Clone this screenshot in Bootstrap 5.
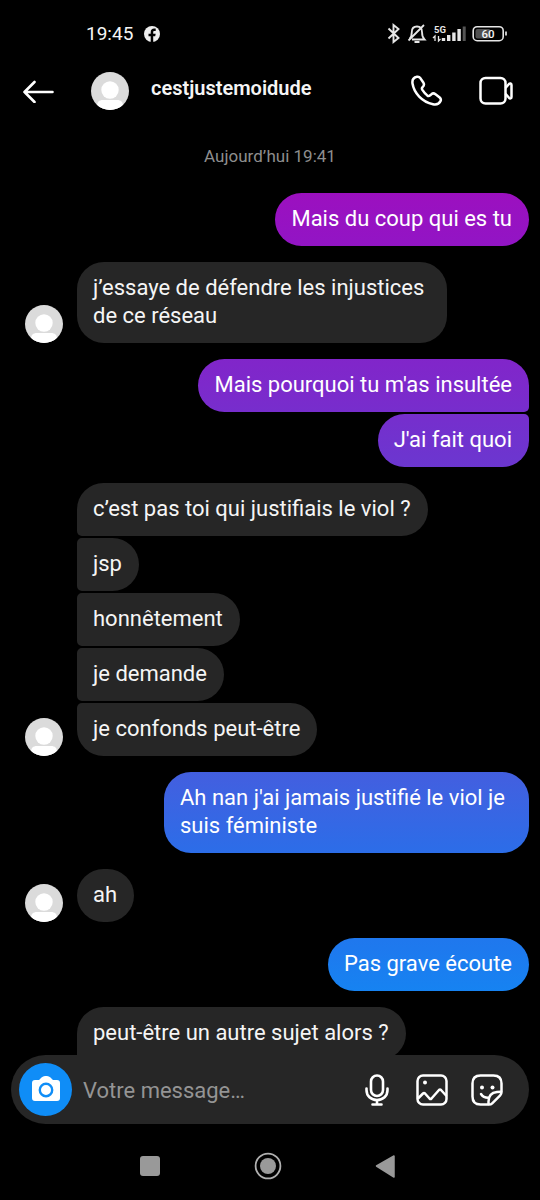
<!DOCTYPE html>
<html lang="fr">
<head>
<meta charset="utf-8">
<meta name="viewport" content="width=device-width, initial-scale=1">
<title>cestjustemoidude</title>
<link href="https://cdn.jsdelivr.net/npm/bootstrap@5.3.0/dist/css/bootstrap.min.css" rel="stylesheet">
<style>
  body { background: #000; color: #f5f5f5; font-family: Roboto, "Noto Sans", sans-serif; font-size: 22px; line-height: 28px; }
  svg { display: block; flex: none; }
  .status-bar { height: 68px; padding: 0 33px 0 86px; font-size: 19px; }
  .facebook-mark { margin-left: 8px; }
  .chat-header { height: 46px; padding: 0 26px 0 22px; }
  .header-avatar { margin-left: 37px; }
  .chat-name { font-size: 20px; font-weight: 600; line-height: 24px; padding-bottom: 6px; margin-left: 22px; }
  .icon-btn { background: none; border: 0; padding: 0; color: #fff; }
  .day-label { font-size: 17px; line-height: 24px; color: #8e8e8e; margin: 30px 0 25px; }
  .thread { padding: 0 11px 0 25px; gap: 16px; }
  .bubble-stack { gap: 2px; }
  .bubble { padding: 12px 17px 13px 16px; border-radius: 27px; }
  .theirs .bubble { background: #262626; max-width: 370px; }
  .mine .bubble {
    max-width: 365px;
    color: #fff;
    background: linear-gradient(#9c10bf 16%, #9314c4 20%, #7d29cb 32%, #6d35cf 38%, #4160e0 65%, #2c6de8 71%, #1e79ee 79%, #1584f2 83%) fixed;
  }
  .theirs .bubble:not(:last-child), .theirs .bubble.continues { border-bottom-left-radius: 5px; }
  .theirs .bubble + .bubble { border-top-left-radius: 5px; }
  .mine .bubble:not(:last-child) { border-bottom-right-radius: 5px; }
  .mine .bubble + .bubble { border-top-right-radius: 5px; }
  .theirs { gap: 14px; }
  .avatar-slot { width: 38px; flex: none; }
  .bottom-area { margin-top: -6px; }
  .composer { margin: 0 11px; padding: 8px 26px 8px 8px; border-radius: 35px; background: #262626; min-height: 69px; }
  .camera-btn { width: 53px; height: 53px; border: 0; padding: 0 0 2px; background: #0f8df7; flex: none; }
  .composer-input { background: none; border: 0; outline: 0; padding: 2px 0 0; margin-left: 11px; min-width: 0; color: #f5f5f5; }
  .composer-input::placeholder { color: #949494; opacity: 1; }
  .composer-tools { gap: 23px; }
  .system-nav { height: 76px; padding: 8px 142px 0 137px; }
</style>
</head>
<body>
<svg width="0" height="0" class="position-absolute" aria-hidden="true">
  <symbol id="avatar" viewBox="0 0 38 38">
    <clipPath id="disc"><circle cx="19" cy="19" r="19"/></clipPath>
    <g clip-path="url(#disc)">
      <rect width="38" height="38" fill="#dbdbdb"/>
      <circle cx="19" cy="18" r="8.7" fill="#fff"/>
      <path d="M6 38v-4c0-4 2-6 6-6h14c4 0 6 2 6 6v4z" fill="#fff"/>
    </g>
  </symbol>
</svg>

<div class="d-flex flex-column min-vh-100">
  <div class="status-bar d-flex align-items-center">
    <span>19:45</span>
    <svg class="facebook-mark" width="20" height="16" viewBox="0 0 20 16" aria-label="Facebook"><circle cx="11" cy="8" r="8" fill="#eee"/><path d="M9.700 16V10.200H7.500V7.700H9.700V6.300c0-2.500 1.300-3.700 3.500-3.700h1.500v2.300h-1.200c-1 0-1.300.5-1.300 1.400v1.400h2.500l-.5 2.500h-2V16z" fill="#000"/></svg>
    <svg class="ms-auto" width="120" height="22" viewBox="387 23 120 22" fill="none" stroke="#e6e6e6" aria-label="Bluetooth, silencieux, 5G, batterie 60">
      <path d="M388.500 28.500l10 9.500-5 4V25l5 4-10 9.500" stroke-width="1.900"/>
      <path d="M412 39.500h12.500c-2-2-2.500-3.500-2.500-7.500 0-3.500-1.500-5.500-5-5.500s-5.200 2.500-5.200 5.500c0 3-.3 5-2.300 7M424 25l-15.500 15.500M414.500 42h5" stroke-width="1.800"/>
      <text x="434" y="32.500" font-size="9.500" font-weight="700" fill="#e6e6e6" stroke="none">5G</text>
      <path d="M435 41v-5l-2 2M438.500 36v5l2-2" stroke-width="1.300"/>
      <path d="M443.500 41v-3M448.700 41v-6M453.900 41v-8.500M459.100 41V29" stroke-width="3.400"/>
      <path d="M464.200 41V26.500" stroke-width="3" stroke="#555"/>
      <rect x="473.200" y="26.700" width="30" height="14" rx="4" stroke-width="1.600"/>
      <rect x="475.500" y="29" width="15" height="9.500" rx="2" fill="#505050" stroke="none"/>
      <path d="M506 31.500v4" stroke-width="1.700"/>
      <text x="488" y="38" font-size="11.500" font-weight="500" text-anchor="middle" fill="#f5f5f5" stroke="none">60</text>
    </svg>
  </div>

  <header class="chat-header d-flex align-items-center">
    <button class="icon-btn" type="button" aria-label="Retour">
      <svg width="32" height="24" viewBox="0 0 32 24" fill="none" stroke="currentColor" stroke-width="2.600" stroke-linecap="round" stroke-linejoin="round"><path d="M2.500 13H30.500M12.500 3L2.500 13l10 10"/></svg>
    </button>
    <svg class="header-avatar" width="38" height="38"><use href="#avatar"/></svg>
    <h1 class="chat-name mb-0">cestjustemoidude</h1>
    <div class="d-flex align-items-center ms-auto gap-4">
      <button class="icon-btn" type="button" aria-label="Appel audio">
        <svg width="44" height="32" viewBox="405 75 44 32" fill="none" stroke="currentColor" stroke-width="2.500" stroke-linejoin="round"><path d="M417 76.800C413.500 77.500 412 80 412.500 83.500c1.500 9.500 9.500 18.300 20.500 20.700 3.300.7 6-.2 7.500-3 .8-1.600.3-2.700-.8-3.700l-4.200-3.300c-1.500-1.100-2.800-1.100-4 0l-1.600 1.300c-.9.700-1.800.6-2.700-.1-2-1.700-3.600-3.600-5-5.800-.5-.9-.4-1.700.4-2.500 1.500-1.400 1.800-2.700.9-4.300l-3.200-4.700c-.9-1.200-1.900-1.600-3.300-1.300z"/></svg>
      </button>
      <button class="icon-btn" type="button" aria-label="Appel vidéo">
        <svg width="41" height="30" viewBox="473 76 41 30" fill="none" stroke="currentColor" stroke-width="2.500" stroke-linejoin="round"><rect x="480.500" y="78" width="25" height="25.500" rx="5"/><path d="M505.500 88l3.500-4c1-1 2.500-.7 2.500.9v12c0 1.600-1.500 1.900-2.500.9l-3.500-4"/></svg>
      </button>
    </div>
  </header>

  <main class="flex-grow-1">
    <p class="day-label text-center">Aujourd’hui 19:41</p>
    <div class="thread d-flex flex-column">
      <div class="mine bubble-stack d-flex flex-column align-items-end">
        <div class="bubble">Mais du coup qui es tu</div>
      </div>
      <div class="theirs d-flex align-items-end">
        <svg width="38" height="38"><use href="#avatar"/></svg>
        <div class="bubble-stack d-flex flex-column align-items-start">
          <div class="bubble">j’essaye de défendre les injustices de ce réseau</div>
        </div>
      </div>
      <div class="mine bubble-stack d-flex flex-column align-items-end">
        <div class="bubble">Mais pourquoi tu m'as insultée</div>
        <div class="bubble">J'ai fait quoi</div>
      </div>
      <div class="theirs d-flex align-items-end">
        <svg width="38" height="38"><use href="#avatar"/></svg>
        <div class="bubble-stack d-flex flex-column align-items-start">
          <div class="bubble">c’est pas toi qui justifiais le viol ?</div>
          <div class="bubble">jsp</div>
          <div class="bubble">honnêtement</div>
          <div class="bubble">je demande</div>
          <div class="bubble">je confonds peut-être</div>
        </div>
      </div>
      <div class="mine bubble-stack d-flex flex-column align-items-end">
        <div class="bubble">Ah nan j'ai jamais justifié le viol je suis féministe</div>
      </div>
      <div class="theirs d-flex align-items-end">
        <svg width="38" height="38"><use href="#avatar"/></svg>
        <div class="bubble-stack d-flex flex-column align-items-start">
          <div class="bubble">ah</div>
        </div>
      </div>
      <div class="mine bubble-stack d-flex flex-column align-items-end">
        <div class="bubble">Pas grave écoute</div>
      </div>
      <div class="theirs d-flex align-items-end">
        <div class="avatar-slot"></div>
        <div class="bubble-stack d-flex flex-column align-items-start">
          <div class="bubble continues">peut-être un autre sujet alors ?</div>
        </div>
      </div>
    </div>
  </main>

  <footer class="bottom-area position-relative">
    <form class="composer d-flex align-items-center">
      <button class="camera-btn rounded-circle d-flex align-items-center justify-content-center" type="button" aria-label="Appareil photo">
        <svg width="28" height="26" viewBox="0 0 28 26"><path d="M3 4h4l2.500-2.500Q11 0 13 0h2q2 0 3.500 1.500L21 4h4q3 0 3 3v15q0 3-3 3H3q-3 0-3-3V7q0-3 3-3z" fill="#fff"/><circle cx="14" cy="14" r="6.200" fill="#fff" stroke="#0f8df7" stroke-width="2.400"/></svg>
      </button>
      <input class="composer-input flex-grow-1" type="text" placeholder="Votre message…" aria-label="Votre message">
      <div class="composer-tools d-flex align-items-center">
        <button class="icon-btn" type="button" aria-label="Message vocal">
          <svg width="32" height="32" viewBox="0 0 32 32" fill="none" stroke="currentColor" stroke-width="2.600" stroke-linecap="round"><rect x="10" y="1.500" width="12" height="20.500" rx="6"/><path d="M5.500 14.500v1.500c0 6 4.500 10 10.500 10s10.500-4 10.500-10v-1.500M16 26v4M11.500 30.500h9"/></svg>
        </button>
        <button class="icon-btn" type="button" aria-label="Galerie">
          <svg width="32" height="32" viewBox="0 0 32 32" fill="none" stroke="currentColor" stroke-width="2.500" stroke-linejoin="round"><rect x="1.500" y="1.500" width="29" height="29" rx="5.500"/><path d="M2 24.500l5-5q1-1 2 0l4.500 5q1 1 2 0l7.500-8.500q1-1 2 0l5.500 6"/><circle cx="9" cy="8.500" r="2" fill="currentColor" stroke="none"/></svg>
        </button>
        <button class="icon-btn" type="button" aria-label="Autocollants">
          <svg width="32" height="32" viewBox="0 0 32 32" fill="none" stroke="currentColor" stroke-width="2.500" stroke-linejoin="round" stroke-linecap="round"><path d="M9.500 1.500h13q8 0 8 8v8.500q0 2-1.300 3.300l-8 8q-1.200 1.200-3.200 1.200H9.500q-8 0-8-8v-13q0-8 8-8z"/><path d="M17.500 30v-2.500q0-8.500 8.500-9.500l4-.3M10 20q2.500 4 7.500 3.800"/><circle cx="11" cy="13.500" r="2" fill="currentColor" stroke="none"/><circle cx="21.500" cy="13.500" r="2" fill="currentColor" stroke="none"/></svg>
        </button>
      </div>
    </form>
    <nav class="system-nav d-flex align-items-center justify-content-between" aria-label="Navigation système">
      <button class="icon-btn" type="button" aria-label="Applications récentes"><svg width="26" height="26" viewBox="0 0 26 26"><rect x="3" y="3" width="20" height="20" rx="3" fill="#999"/></svg></button>
      <button class="icon-btn" type="button" aria-label="Accueil"><svg width="28" height="28" viewBox="0 0 28 28"><circle cx="14" cy="14" r="12.400" fill="none" stroke="#b0b0b0" stroke-width="1.800"/><circle cx="14" cy="14" r="8" fill="#999"/></svg></button>
      <button class="icon-btn" type="button" aria-label="Précédent"><svg width="26" height="26" viewBox="0 0 26 26"><path d="M4.500 13L22 3v21z" fill="#999" stroke="#999" stroke-width="1.500" stroke-linejoin="round"/></svg></button>
    </nav>
  </footer>
</div>
<script src="https://cdn.jsdelivr.net/npm/bootstrap@5.3.0/dist/js/bootstrap.bundle.min.js"></script>
</body>
</html>
